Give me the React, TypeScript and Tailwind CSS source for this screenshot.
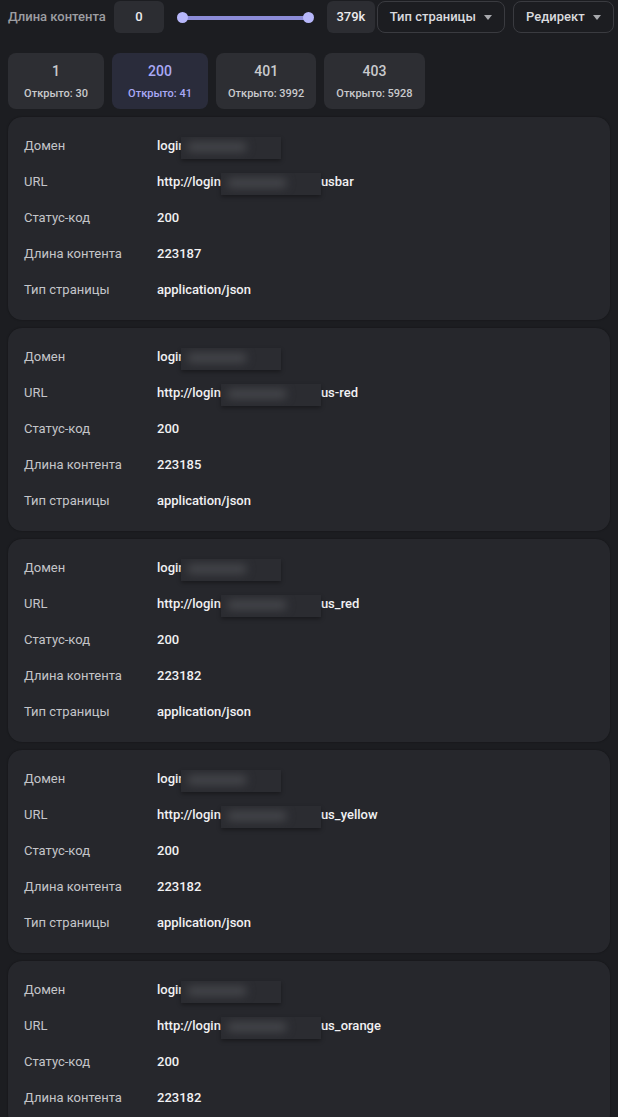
import React from "react";

const Caret = () => (
  <svg width="8" height="5" viewBox="0 0 8 5" className="ml-2">
    <path d="M0 0 L8 0 L4 5 Z" fill="#a8a9ad" />
  </svg>
);

const Blur = ({ w, dy }: { w: number; dy: number }) => (
  <span
    className="relative inline-block h-[22px] overflow-hidden bg-[#2b2c31] shadow-[0_2px_4px_rgba(0,0,0,0.35)]"
    style={{ width: w, transform: `translateY(${dy}px)` }}
  >
    <span className="absolute left-[6px] top-[5px] h-[10px] w-[60%] rounded-full bg-[#44454a] blur-[4px]" />
  </span>
);

type Card = { suffix: string; len: string; partial?: boolean };

const cards: Card[] = [
  { suffix: "usbar", len: "223187" },
  { suffix: "us-red", len: "223185" },
  { suffix: "us_red", len: "223182" },
  { suffix: "us_yellow", len: "223182" },
  { suffix: "us_orange", len: "223182", partial: true },
];

const Row = ({ label, children }: { label: string; children: React.ReactNode }) => (
  <div className="flex h-9 items-center">
    <div className="w-[133px] shrink-0 whitespace-nowrap text-[13px] text-[#c4c5c9]">{label}</div>
    <div className="flex items-center whitespace-nowrap text-[13px] font-medium text-[#f1f1f3]">{children}</div>
  </div>
);

const tabs = [
  { code: "1", open: "Открыто: 30", active: false },
  { code: "200", open: "Открыто: 41", active: true },
  { code: "401", open: "Открыто: 3992", active: false },
  { code: "403", open: "Открыто: 5928", active: false },
];

export default function App() {
  return (
    <div
      className="h-[1117px] w-[618px] overflow-hidden bg-[#1c1d21] px-2 pt-px"
      style={{ fontFamily: "Roboto, 'Noto Sans', sans-serif" }}
    >
      {/* Header */}
      <div className="flex h-8 items-center">
        <div className="shrink-0 whitespace-nowrap text-[13px] font-medium text-[#9c9da1]">Длина контента</div>
        <div className="ml-2 flex h-8 w-[50px] shrink-0 items-center justify-center rounded-md bg-[#2c2d32] text-[13px] font-medium text-[#ececee]">
          0
        </div>
        <div className="relative ml-[13px] h-[11px] w-[137px] shrink-0">
          <div className="absolute left-[5px] right-[5px] top-[4px] h-[4px] rounded bg-[#8c8cd8]" />
          <div className="absolute left-0 top-0 h-[11px] w-[11px] rounded-full bg-[#b7b7fa]" />
          <div className="absolute right-0 top-0 h-[11px] w-[11px] rounded-full bg-[#b7b7fa]" />
        </div>
        <div className="ml-[13px] flex h-8 w-[48px] shrink-0 items-center justify-center rounded-md bg-[#2c2d32] text-[13px] font-medium text-[#ececee]">
          379k
        </div>
        <div className="ml-[2px] flex h-8 w-[128px] shrink-0 items-center justify-center whitespace-nowrap rounded-lg border border-[#3a3b40] text-[13px] font-medium text-[#d9dade]">
          Тип страницы
          <Caret />
        </div>
        <div className="ml-2 flex h-8 w-[101px] shrink-0 items-center justify-center whitespace-nowrap rounded-lg border border-[#3a3b40] text-[13px] font-medium text-[#d9dade]">
          Редирект
          <Caret />
        </div>
      </div>

      {/* Tabs */}
      <div className="mt-5 flex gap-2">
        {tabs.map((t) => (
          <div
            key={t.code}
            className={
              "flex h-14 min-w-[96px] flex-col items-center justify-center rounded-lg px-3 " +
              (t.active ? "bg-[#2a2c3b] text-[#a9a9f6]" : "bg-[#2d2e33] text-[#c9cacd]")
            }
          >
            <div className="text-[14px] font-medium leading-5">{t.code}</div>
            <div className="mt-[5px] whitespace-nowrap text-[11px] font-medium leading-4">{t.open}</div>
          </div>
        ))}
      </div>

      {/* Cards */}
      <div className="mt-2 flex flex-col gap-2">
        {cards.map((c, i) => (
          <div
            key={i}
            className="rounded-[14px] bg-[#26272c] px-4 pb-3 pt-[11px] shadow-[0_0_2px_rgba(0,0,0,0.4)]"
          >
            <Row label="Домен">
              <span>login</span>
              <span className="-ml-[5px]">
                <Blur w={100} dy={5} />
              </span>
            </Row>
            <Row label="URL">
              <span>http://login</span>
              <Blur w={100} dy={2} />
              <span>{c.suffix}</span>
            </Row>
            <Row label="Статус-код">200</Row>
            <Row label="Длина контента">{c.len}</Row>
            {!c.partial && <Row label="Тип страницы">application/json</Row>}
          </div>
        ))}
      </div>
    </div>
  );
}
